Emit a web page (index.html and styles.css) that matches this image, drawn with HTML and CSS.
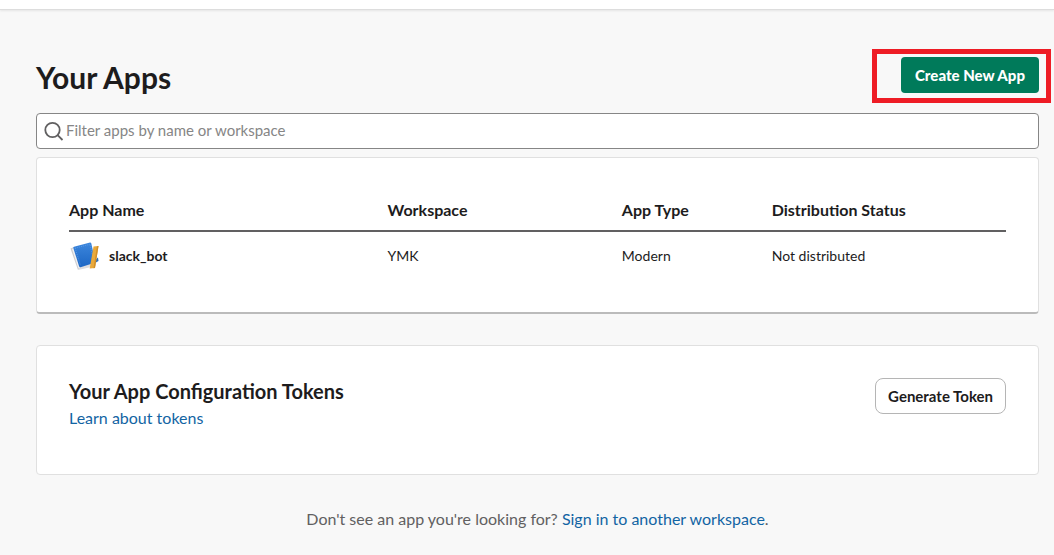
FILE: index.html
```
<!DOCTYPE html>
<html lang="en">
<head>
<meta charset="utf-8">
<meta name="viewport" content="width=device-width, initial-scale=1">
<title>Your Apps</title>
<link rel="stylesheet" href="styles.css">
</head>
<body>
<header class="topbar"></header>
<main class="page">
  <div class="page-head">
    <h1 class="page-title">Your Apps</h1>
    <div class="highlighted">
      <button class="btn btn-primary" type="button">Create New App</button>
      <span class="highlight-box" aria-hidden="true"></span>
    </div>
  </div>

  <label class="filter">
    <svg class="filter-icon" viewBox="0 0 20 20" aria-hidden="true">
      <circle cx="8.5" cy="9" r="7.2"/>
      <path d="M13.600 14.200 L18.500 19"/>
    </svg>
    <input class="filter-input" type="text" aria-label="Filter apps" placeholder="Filter apps by name or workspace">
  </label>

  <section class="card card-apps">
    <table class="apps">
      <colgroup><col class="col-name"><col class="col-workspace"><col class="col-type"><col></colgroup>
      <thead>
        <tr><th scope="col">App Name</th><th scope="col">Workspace</th><th scope="col">App Type</th><th scope="col">Distribution Status</th></tr>
      </thead>
      <tbody>
        <tr>
          <td>
            <a class="app-link" href="#">
              <svg class="app-icon" viewBox="0 0 32 32" aria-hidden="true">
                <defs>
                  <linearGradient id="cover" x1="0" y1="0" x2="0" y2="1">
                    <stop offset="0" stop-color="#3c86dc"/><stop offset="1" stop-color="#1c66c4"/>
                  </linearGradient>
                </defs>
                <path d="M1.500 8.500 L5 7 L12 27 L9 30 Z" fill="#cdcdd0"/>
                <path d="M3 9 L5 8 L11.500 27 L9.500 28.500 Z" fill="#f0f0f2"/>
                <path d="M9 30 L12 26 L23.500 23 L22.500 27 Z" fill="#dcdcdf"/>
                <path d="M26 20 L29 17.500 L29.500 21 L26 23 Z" fill="#2b6dbc"/>
                <path d="M5 6.700 L21 2.600 Q22 2.500 22.300 3.500 L26.500 22.500 L11.500 27.300 Q10.500 27.400 10.200 26.500 L4.300 8 Q4.200 7 5 6.700 Z" fill="url(#cover)"/>
                <path d="M6.200 8.200 L21 4.300 L24.500 20.500 M6.200 8.200 L11.500 25.500" fill="none" stroke="#69a7ee" stroke-width=".6" stroke-dasharray="1 1"/>
                <path d="M24.500 6.500 L29.500 6 L26 28 L20.700 28.500 Z" fill="#e9a93b"/>
                <path d="M28 6.200 L29.500 6 L26 28 L24.500 28.200 Z" fill="#d18f29"/>
              </svg>
              <span>slack_bot</span>
            </a>
          </td>
          <td>YMK</td>
          <td>Modern</td>
          <td>Not distributed</td>
        </tr>
      </tbody>
    </table>
  </section>

  <section class="card card-tokens">
    <div>
      <h2 class="card-title">Your App Configuration Tokens</h2>
      <a class="link" href="#">Learn about tokens</a>
    </div>
    <button class="btn btn-outline" type="button">Generate Token</button>
  </section>

  <p class="footnote">Don't see an app you're looking for? <a class="link" href="#">Sign in to another workspace</a>.</p>
</main>
</body>
</html>
```
FILE: styles.css
```
* { box-sizing: border-box; }

body {
  margin: 0;
  background: #f8f8f8;
  color: #1d1c1d;
  font-family: Lato, "Noto Sans", sans-serif;
  font-size: 16px;
  line-height: 24px;
}

.topbar {
  height: 10px;
  background: #fff;
  border-bottom: 1px solid #dddddd;
  box-shadow: 0 1px 2px rgba(0, 0, 0, .08);
}

.page { padding: 47px 15px 20px 36px; }

.page-head {
  display: flex;
  justify-content: space-between;
  align-items: flex-start;
  margin-bottom: 16px;
}

.page-title {
  margin: 0;
  font-size: 30px;
  line-height: 40px;
  font-weight: 700;
}

.highlighted { position: relative; }

.highlight-box {
  position: absolute;
  inset: -8px -12px -10px -29px;
  border: 5px solid #ee1c25;
  pointer-events: none;
}

.btn {
  display: block;
  height: 36px;
  border-radius: 4px;
  font-family: inherit;
  font-size: 15px;
  white-space: nowrap;
}

.btn-primary {
  padding: 0 14px;
  border: 0;
  background: #007a5a;
  color: #fff;
  font-weight: 900;
}

.btn-outline {
  padding: 0 12px;
  border: 1px solid #b5b5b5;
  border-radius: 8px;
  background: #fff;
  color: #1d1c1d;
  font-weight: 700;
}

.filter {
  display: flex;
  align-items: center;
  gap: 2px;
  height: 36px;
  padding: 0 7px;
  border: 1px solid #868686;
  border-radius: 4px;
  background: #fff;
}

.filter-icon {
  flex: none;
  width: 20px;
  height: 20px;
  fill: none;
  stroke: #616061;
  stroke-width: 1.8;
}

.filter-input {
  flex: 1;
  min-width: 0;
  padding: 0 0 2px;
  border: 0;
  outline: 0;
  background: transparent;
  color: #1d1c1d;
  font-family: inherit;
  font-size: 15px;
}

.filter-input::placeholder { color: #868686; opacity: 1; }

.card {
  padding: 32px;
  border: 1px solid #e0e0e0;
  border-radius: 4px;
  background: #fff;
}

.card-apps {
  margin-top: 8px;
  border-bottom: 2px solid #bbbbbb;
}

.apps {
  width: 100%;
  border-collapse: collapse;
  table-layout: fixed;
  text-align: left;
}

.col-name { width: 34%; }
.col-workspace { width: 25%; }
.col-type { width: 16%; }

.apps th {
  padding: 8px 0;
  border-bottom: 2px solid #616061;
  font-size: 16px;
  font-weight: 700;
}

.apps td {
  padding: 8px 0;
  font-size: 14px;
  line-height: 32px;
}

.app-link {
  display: flex;
  align-items: center;
  gap: 8px;
  color: inherit;
  font-weight: 700;
  text-decoration: none;
}

.app-icon { width: 32px; height: 32px; }

.card-tokens {
  display: flex;
  justify-content: space-between;
  align-items: flex-start;
  min-height: 130px;
  margin-top: 31px;
}

.card-title {
  margin: 0 0 2px;
  font-size: 20px;
  line-height: 26px;
  font-weight: 700;
}

.link { color: #1264a3; text-decoration: none; }

.footnote {
  margin: 32px 0 0;
  color: #616061;
  text-align: center;
}
```
